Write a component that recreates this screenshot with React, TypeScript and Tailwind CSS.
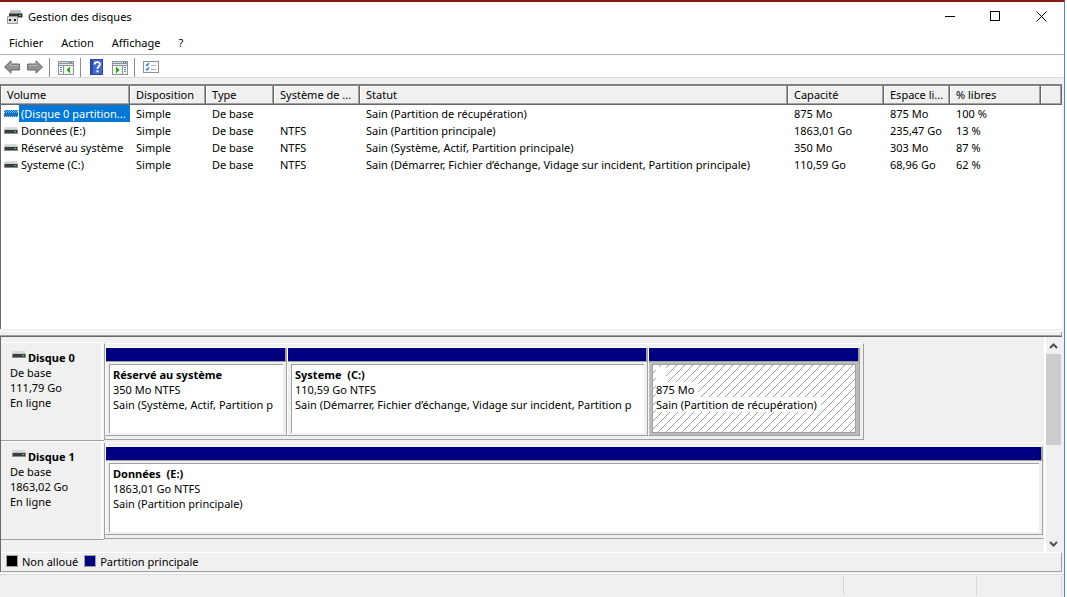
import React from 'react';

interface Volume {
  name: string;
  layout: string;
  type: string;
  fs: string;
  status: string;
  capacity: string;
  free: string;
  percent: string;
  selected?: boolean;
}

interface Partition {
  title: string;
  size: string;
  status: string;
  width: string;
  selected?: boolean;
}

interface Disk {
  name: string;
  type: string;
  size: string;
  state: string;
  full?: boolean;
  partitions: Partition[];
}

const columns = [
  { label: 'Volume', width: 'w-[129px]' },
  { label: 'Disposition', width: 'w-[76px]' },
  { label: 'Type', width: 'w-[68px]' },
  { label: 'Système de ...', width: 'w-[86px]' },
  { label: 'Statut', width: 'w-[428px]' },
  { label: 'Capacité', width: 'w-[96px]' },
  { label: 'Espace li...', width: 'w-[66px]' },
  { label: '% libres', width: 'w-[91px]' },
  { label: '', width: '' },
];

const volumes: Volume[] = [
  { name: '(Disque 0 partition...', layout: 'Simple', type: 'De base', fs: '', status: 'Sain (Partition de récupération)', capacity: '875 Mo', free: '875 Mo', percent: '100 %', selected: true },
  { name: 'Données (E:)', layout: 'Simple', type: 'De base', fs: 'NTFS', status: 'Sain (Partition principale)', capacity: '1863,01 Go', free: '235,47 Go', percent: '13 %' },
  { name: 'Réservé au système', layout: 'Simple', type: 'De base', fs: 'NTFS', status: 'Sain (Système, Actif, Partition principale)', capacity: '350 Mo', free: '303 Mo', percent: '87 %' },
  { name: 'Systeme (C:)', layout: 'Simple', type: 'De base', fs: 'NTFS', status: 'Sain (Démarrer, Fichier d’échange, Vidage sur incident, Partition principale)', capacity: '110,59 Go', free: '68,96 Go', percent: '62 %' },
];

const disks: Disk[] = [
  {
    name: 'Disque 0',
    type: 'De base',
    size: '111,79 Go',
    state: 'En ligne',
    partitions: [
      { title: 'Réservé au système', size: '350 Mo NTFS', status: 'Sain (Système, Actif, Partition p', width: 'w-[182px]' },
      { title: 'Systeme  (C:)', size: '110,59 Go NTFS', status: 'Sain (Démarrer, Fichier d’échange, Vidage sur incident, Partition p', width: 'w-[361px]' },
      { title: '', size: '875 Mo', status: 'Sain (Partition de récupération)', width: 'w-[212px]', selected: true },
    ],
  },
  {
    name: 'Disque 1',
    type: 'De base',
    size: '1863,02 Go',
    state: 'En ligne',
    full: true,
    partitions: [
      { title: 'Données  (E:)', size: '1863,01 Go NTFS', status: 'Sain (Partition principale)', width: 'w-full' },
    ],
  },
];

const DriveIcon: React.FC<{ selected?: boolean }> = ({ selected }) => (
  <svg width="14" height="8" viewBox="0 0 14 8" shapeRendering="crispEdges" className="shrink-0">
    {selected ? (
      <>
        <rect x="1" y="0" width="12" height="3" fill="#6fb0e6" />
        <rect x="0" y="3" width="14" height="4" fill="#1f6fb5" />
        {[0, 2, 4, 6, 8, 10, 12].map((x) => (
          <React.Fragment key={x}>
            <rect x={x + 1} y="0" width="1" height="1" fill="#0078d7" />
            <rect x={x} y="1" width="1" height="1" fill="#0078d7" />
            <rect x={x + 1} y="2" width="1" height="1" fill="#0078d7" />
            <rect x={x} y="4" width="1" height="1" fill="#0078d7" />
            <rect x={x + 1} y="6" width="1" height="1" fill="#8cc4f0" />
          </React.Fragment>
        ))}
      </>
    ) : (
      <>
        <path d="M1 0h12l1 3H0z" fill="#d9dadc" />
        <rect x="0" y="2" width="14" height="1" fill="#c4c5c8" />
        <rect x="0" y="3" width="14" height="4" fill="#8a8c8e" />
        <rect x="1" y="3" width="12" height="3" fill="#3a3c3e" />
        <rect x="10" y="4" width="2" height="1" fill="#2fe04a" />
      </>
    )}
  </svg>
);

const AppIcon = () => (
  <svg width="16" height="16" viewBox="0 0 16 16" className="shrink-0">
    <path d="M3.500 1h10l1.500 4H2z" fill="#bfc0c2" />
    <path d="M2 4.500h13.500v4H2z" fill="#333436" />
    <rect x="12" y="6" width="2" height="1" fill="#36d84c" />
    <path d="M0.500 7.500h10v7h-10z" fill="#dedede" stroke="#9a9a9a" />
    <rect x="2" y="10" width="2" height="2" fill="#222" />
    <rect x="7" y="10" width="2" height="2" fill="#222" />
  </svg>
);

const ArrowIcon: React.FC<{ flip?: boolean }> = ({ flip }) => (
  <svg width="16" height="14" viewBox="0 0 16 14">
    <path
      d={flip ? 'M15.500 7 9 0.800V4H0.600v6H9v3.200z' : 'M0.500 7 7 0.800V4h8.400v6H7v3.200z'}
      fill="#949494"
      stroke="#666"
      strokeLinejoin="round"
    />
    <path d={flip ? 'M1.500 5.500h8V3' : 'M14.500 5.500h-8V3'} fill="none" stroke="#b5b5b5" />
  </svg>
);

const PaneIcon: React.FC<{ right?: boolean }> = ({ right }) => (
  <svg width="16" height="14" viewBox="0 0 16 14" shapeRendering="crispEdges">
    <rect width="16" height="14" fill="#8b929a" />
    <rect x="1" y="1" width="14" height="1" fill="#d3d8dd" />
    <rect x="11" y="1" width="1" height="1" fill="#667" />
    <rect x="13" y="1" width="1" height="1" fill="#667" />
    <rect x="1" y="3" width="14" height="1" fill="#e8ebee" />
    <rect x="1" y="5" width="14" height="8" fill="#fff" />
    {right ? (
      <>
        <rect x="10" y="5" width="1" height="8" fill="#8b929a" />
        <path d="M12 6h2v1h-2zM12 8h2v1h-2zM12 10h2v1h-2z" fill="#4f86bd" />
        <path d="M1 5h9v8H1z" fill="#eef6e8" />
        <path d="M4 6v6l4-3z" fill="#35a526" />
      </>
    ) : (
      <>
        <rect x="5" y="5" width="1" height="8" fill="#8b929a" />
        <path d="M2 6h2v1H2zM2 8h2v1H2zM2 10h2v1H2z" fill="#4f86bd" />
        <path d="M6 5h9v8H6z" fill="#eef6e8" />
        <path d="M12 6v6L8 9z" fill="#35a526" />
      </>
    )}
  </svg>
);

const HelpIcon = () => (
  <svg width="13" height="16" viewBox="0 0 13 16">
    <rect x="0.500" y="0.500" width="12" height="15" fill="#4468cc" stroke="#2b479c" />
    <rect x="1" y="1" width="2" height="14" fill="#2c4ba8" />
    <path d="M4.500 5.500C4.500 2.300 10 2.300 10 5.300 10 7.300 7.400 7.300 7.400 10" fill="none" stroke="#fff" strokeWidth="1.800" />
    <rect x="6.500" y="11.300" width="2" height="2" fill="#fff" />
  </svg>
);

const ListIcon = () => (
  <svg width="16" height="12" viewBox="0 0 16 12">
    <rect x="0.500" y="0.500" width="15" height="11" fill="#fafafa" stroke="#8b929a" />
    <path d="M3 3.500l1 1 2-2.500M3 8l1 1 2-2.500" fill="none" stroke="#2a82d0" strokeWidth="1.300" />
    <path d="M8 4.500h5M8 8.500h5" stroke="#a9b4be" />
  </svg>
);

const Separator = () => <div className="h-[19px] w-px bg-[#8d8d8d]" />;

const TitleBar = () => (
  <header className="flex h-[29px] items-center bg-white pl-[7px]">
    <AppIcon />
    <h1 className="flex-1 pl-[5px]">Gestion des disques</h1>
    <button aria-label="Réduire" className="flex h-full w-[46px] items-center justify-center">
      <svg width="11" height="11" shapeRendering="crispEdges"><path d="M0 5.500h10" stroke="#000" /></svg>
    </button>
    <button aria-label="Agrandir" className="flex h-full w-[45px] items-center justify-center">
      <svg width="11" height="11" shapeRendering="crispEdges"><path d="M0.500 0.500h9v9h-9z" fill="none" stroke="#000" /></svg>
    </button>
    <button aria-label="Fermer" className="flex h-full w-[46px] items-center justify-center">
      <svg width="11" height="11"><path d="M0.500 0.500l10 10M10.500 0.500l-10 10" stroke="#000" /></svg>
    </button>
  </header>
);

const MenuBar = () => (
  <nav className="flex h-[24px] items-center gap-[18px] border-b border-[#b0b0b0] bg-white pl-[9px]">
    <button>Fichier</button>
    <button>Action</button>
    <button>Affichage</button>
    <button>?</button>
  </nav>
);

const Toolbar = () => (
  <div className="flex h-[23px] items-center border-b border-[#dadada] bg-white pl-1 pt-[2px]">
    <div className="flex items-center gap-[7px] pr-[6px]">
      <button aria-label="Précédent"><ArrowIcon /></button>
      <button aria-label="Suivant"><ArrowIcon flip /></button>
    </div>
    <Separator />
    <button aria-label="Arborescence" className="pl-2 pr-[6px] pt-px"><PaneIcon /></button>
    <Separator />
    <button aria-label="Aide" className="pl-[9px] pr-[9px]"><HelpIcon /></button>
    <button aria-label="Volet Actions" className="pr-[6px] pt-px"><PaneIcon right /></button>
    <Separator />
    <button aria-label="Paramètres" className="pl-2"><ListIcon /></button>
  </div>
);

const VolumeList = () => (
  <section className="flex-1 border-l border-t-2 border-l-[#696969] border-t-[#808080] bg-white">
    <table className="w-full table-fixed border-collapse text-left">
      <thead>
        <tr className="h-[19px]">
          {columns.map((col) => (
            <th
              key={col.label}
              className={`${col.width} whitespace-nowrap bg-[#f0f0f0] p-0 pb-[2px] pl-[6px] font-normal shadow-[inset_-1px_-1px_0_#696969,inset_-2px_-2px_0_#a0a0a0,inset_1px_1px_0_#fff]`}
            >
              {col.label}
            </th>
          ))}
        </tr>
      </thead>
      <tbody>
        {volumes.map((v) => (
          <tr key={v.name} className="h-[17px] whitespace-nowrap">
            <td className="p-0">
              <div className="flex items-center pl-[3px]">
                <DriveIcon selected={v.selected} />
                <span className={v.selected ? 'ml-px flex-1 bg-[#0078d7] pl-[2px] leading-[17px] text-white' : 'pl-[3px] leading-[17px]'}>
                  {v.name}
                </span>
              </div>
            </td>
            <td className="p-0 pl-[6px]">{v.layout}</td>
            <td className="p-0 pl-[6px]">{v.type}</td>
            <td className="p-0 pl-[6px]">{v.fs}</td>
            <td className="p-0 pl-[6px]">{v.status}</td>
            <td className="p-0 pl-[6px]">{v.capacity}</td>
            <td className="p-0 pl-[6px]">{v.free}</td>
            <td className="p-0 pl-[6px]">{v.percent}</td>
            <td className="p-0" />
          </tr>
        ))}
      </tbody>
    </table>
  </section>
);

const Hatch = () => (
  <svg className="absolute inset-0 size-full" shapeRendering="crispEdges">
    <defs>
      <pattern id="hatch" width="8" height="8" patternUnits="userSpaceOnUse">
        {[0, 1, 2, 3, 4, 5, 6, 7].map((i) => (
          <rect key={i} x={7 - i} y={i} width="1" height="1" fill="#a0a0a0" />
        ))}
      </pattern>
    </defs>
    <rect width="100%" height="100%" fill="url(#hatch)" />
  </svg>
);

const PartitionBlock: React.FC<{ partition: Partition }> = ({ partition }) => {
  const { title, size, status, width, selected } = partition;
  const line = selected ? 'w-fit bg-white pr-1' : '';

  return (
    <div className={`${width} flex h-[89px] shrink-0 flex-col border border-b-[#a0a0a0] border-l-white border-r-[#a0a0a0] border-t-white`}>
      <div className="h-[14px] border-b border-r border-[#a0a0a0] bg-[#000080]" />
      <div className={`flex-1 px-[3px] py-[2px] ${selected ? 'bg-[#bcbcbc]' : 'bg-[#f0f0f0]'}`}>
        <div
          className={`relative h-full overflow-hidden whitespace-pre bg-white pl-[3px] pt-[2px] leading-[15px] ${
            selected ? 'border border-[#a0a0a0]' : 'border-l border-t border-[#a0a0a0]'
          }`}
        >
          {selected && <Hatch />}
          <div className="relative">
            <div className={`${line} font-bold`}>{title || '  '}</div>
            <div className={line}>{size}</div>
            <div className={line}>{status}</div>
          </div>
        </div>
      </div>
    </div>
  );
};

const DiskRow: React.FC<{ disk: Disk }> = ({ disk }) => (
  <div className="flex h-[99px]">
    <div className="w-[103px] shrink-0 border-b border-t border-b-[#a0a0a0] border-t-white">
      <div className="mr-px h-full border-r-2 border-white pl-[9px] pt-[7px] leading-[15px]">
        <div className="flex pl-[2px]">
          <div className="pr-[2px] pt-px"><DriveIcon /></div>
          <span className="font-bold">{disk.name}</span>
        </div>
        <div>{disk.type}</div>
        <div>{disk.size}</div>
        <div>{disk.state}</div>
      </div>
    </div>
    <div className={`mb-px mt-px flex border border-b-[#a0a0a0] border-l-[#a0a0a0] border-t-white py-[3px] ${disk.full ? 'flex-1 border-r-[#f0f0f0]' : 'border-r-[#a0a0a0] pr-[3px]'}`}>
      {disk.partitions.map((p) => (
        <PartitionBlock key={p.size} partition={p} />
      ))}
    </div>
  </div>
);

const ScrollBar = () => (
  <div className="flex w-[18px] shrink-0 flex-col border-l-2 border-white pr-px">
    <button aria-label="Défiler vers le haut" className="flex h-[17px] items-center justify-center">
      <svg width="9" height="6"><path d="M1 5l3.500-3.500L8 5" fill="none" stroke="#505050" strokeWidth="2" /></svg>
    </button>
    <div className="h-[91px] bg-[#cdcdcd]" />
    <div className="flex-1" />
    <button aria-label="Défiler vers le bas" className="flex h-[17px] items-center justify-center">
      <svg width="9" height="6"><path d="M1 1l3.500 3.500L8 1" fill="none" stroke="#505050" strokeWidth="2" /></svg>
    </button>
  </div>
);

const DiskView = () => (
  <section className="border-l border-[#696969]">
    <div className="flex h-[215px]">
      <div className="min-w-0 flex-1 pt-[5px]">
        {disks.map((d) => (
          <DiskRow key={d.name} disk={d} />
        ))}
      </div>
      <ScrollBar />
    </div>
    <div className="flex h-5 items-center gap-[6px] border border-b-[#a0a0a0] border-l-transparent border-r-[#a0a0a0] border-t-white pb-[2px] pl-1">
      <div className="flex items-center gap-1">
        <span className="size-3 border border-[#a0a0a0] bg-black" />
        <span>Non alloué</span>
      </div>
      <div className="flex items-center gap-1">
        <span className="size-3 border border-[#a0a0a0] bg-[#000080]" />
        <span>Partition principale</span>
      </div>
    </div>
  </section>
);

const StatusBar = () => (
  <footer className="flex h-[23px] justify-end border-t border-[#d7d7d7] pb-[2px] pr-[2px] pt-px">
    <div className="w-[133px] border-l border-[#d7d7d7]" />
    <div className="w-[86px] border-l border-r border-[#d7d7d7]" />
  </footer>
);

const App = () => {
  return (
    <div className="bg-white pr-[2px]">
      <div className="flex min-h-screen flex-col border-r border-t-2 border-r-[#5b7dbb] border-t-[#8b1a10] bg-[#f0f0f0] font-['Noto_Sans','Open_Sans',sans-serif] text-[11px] leading-[17px] text-black">
        <TitleBar />
        <MenuBar />
        <Toolbar />
        <main className="flex flex-1 flex-col pr-[2px] pt-[6px]">
          <VolumeList />
          <div className="flex h-2 flex-col border-b border-[#696969]">
            <div className="h-[2px]" />
            <div className="h-px bg-white" />
            <div className="flex-1 border-b border-r border-[#a0a0a0]" />
          </div>
          <DiskView />
        </main>
        <div className="h-px" />
        <div className="h-px bg-white" />
        <StatusBar />
      </div>
    </div>
  );
};

export default App;
